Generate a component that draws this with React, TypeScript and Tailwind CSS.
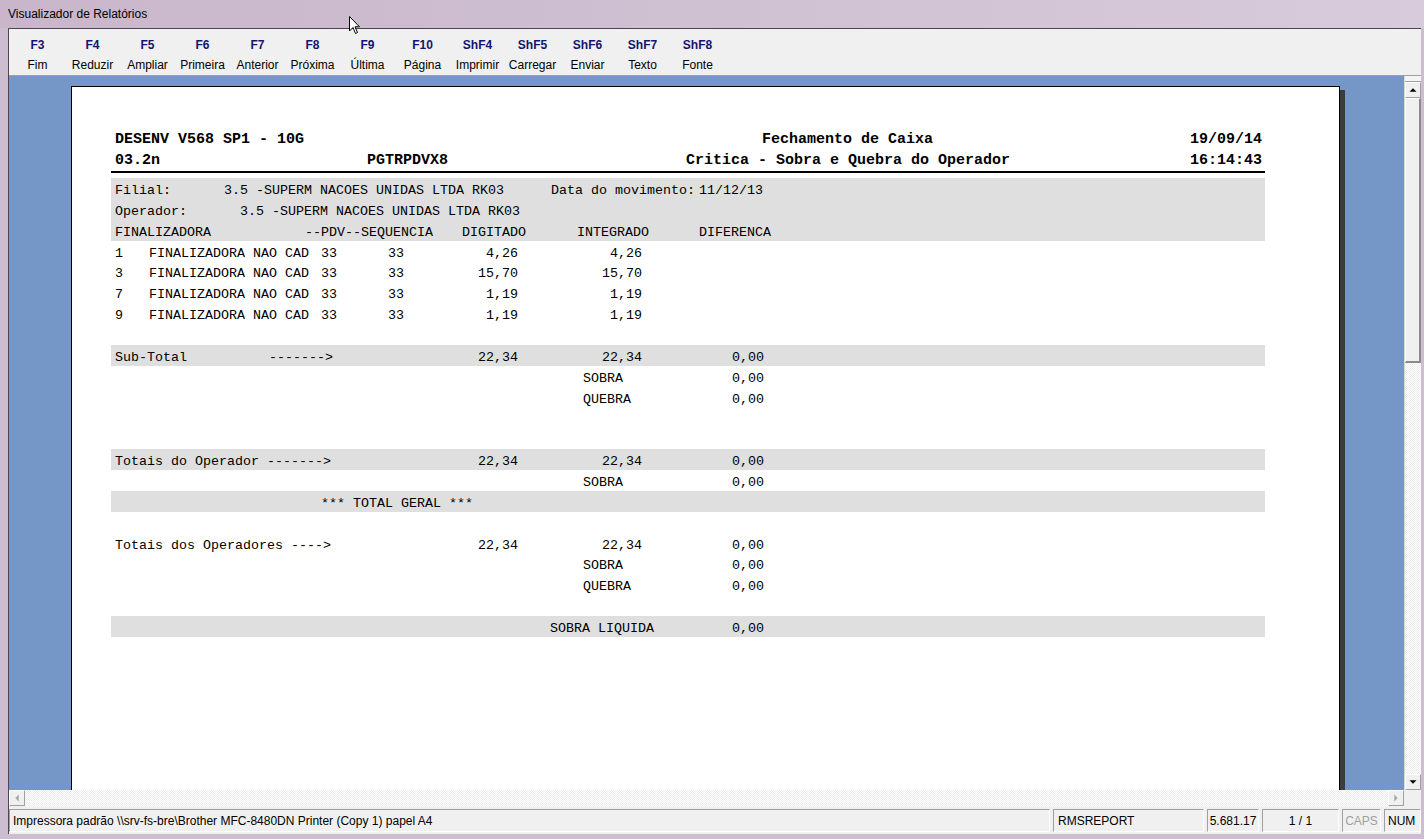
import React from 'react';

const mono = { fontFamily: '"Liberation Mono", "Courier New", monospace' };
const sans = { fontFamily: 'Tahoma, "Liberation Sans", Arial, sans-serif' };

const keys = [
  ['F3', 'Fim'],
  ['F4', 'Reduzir'],
  ['F5', 'Ampliar'],
  ['F6', 'Primeira'],
  ['F7', 'Anterior'],
  ['F8', 'Próxima'],
  ['F9', 'Última'],
  ['F10', 'Página'],
  ['ShF4', 'Imprimir'],
  ['ShF5', 'Carregar'],
  ['ShF6', 'Enviar'],
  ['ShF7', 'Texto'],
  ['ShF8', 'Fonte'],
];

type Seg = { w?: number; t?: string; r?: boolean };

// uma linha do relatorio: segmentos com largura fixa, a partir do x=116
const Line = ({ segs, band }: { segs: Seg[]; band?: boolean }) => (
  <div className={`flex h-[20.86px] items-center pl-[4px] pt-[5px] whitespace-pre text-[13.33px] text-black ${band ? 'bg-[#dfdfdf]' : ''}`}>
    {segs.map((s, i) => (
      <span
        key={i}
        style={s.w ? { width: s.w } : undefined}
        className={`${s.w ? 'shrink-0' : ''} ${s.r ? 'text-right' : ''}`}
      >
        {s.t ?? ''}
      </span>
    ))}
  </div>
);

const totals = (label: string, a: string, b: string, c: string): Seg[] => [
  { w: 234, t: label },
  { w: 169, t: a, r: true },
  { w: 124, t: b, r: true },
  { w: 122, t: c, r: true },
];

const extra = (label: string, v: string): Seg[] => [{ w: 468 }, { w: 100, t: label }, { w: 81, t: v, r: true }];

const dataRow = (n: string, dig: string, intg: string): Seg[] => [
  { w: 34, t: n },
  { w: 172, t: 'FINALIZADORA NAO CAD' },
  { w: 67, t: '33' },
  { w: 40, t: '33' },
  { w: 90, t: dig, r: true },
  { w: 124, t: intg, r: true },
];

const ArrowBtn = ({ dir }: { dir: 'up' | 'down' | 'left' | 'right' }) => {
  const paths: Record<string, string> = {
    up: 'M4 10 L8 6 L12 10 Z',
    down: 'M4 6 L8 10 L12 6 Z',
    left: 'M10 4 L6 8 L10 12 Z',
    right: 'M6 4 L10 8 L6 12 Z',
  };
  const light = dir === 'left' || dir === 'right';
  return (
    <div className="w-[16px] h-[16px] bg-[#f0f0f0] border-t border-l border-white border-r border-b border-r-[#a0a0a0] border-b-[#a0a0a0] flex items-center justify-center shrink-0">
      <svg width="16" height="16" viewBox="0 0 16 16">
        <path d={paths[dir]} fill={light ? '#a8a8a8' : '#000'} />
      </svg>
    </div>
  );
};

const dither = {
  backgroundImage: 'repeating-conic-gradient(#ffffff 0% 25%, #ececec 0% 50%)',
  backgroundSize: '2px 2px',
};

const panel = 'border border-t-[#a0a0a0] border-l-[#a0a0a0] border-r-white border-b-white flex items-center';

export default function App() {
  return (
    <div className="w-[1424px] h-[839px] overflow-hidden flex flex-col bg-[#cdbdd0]" style={sans}>
      {/* barra de titulo */}
      <div className="relative h-[28px] shrink-0 flex items-center pl-[8px] bg-gradient-to-r from-[#c9b6cb] via-[#cfc0d2] to-[#d8cbdb]">
        <span className="text-[12px] text-black">Visualizador de Relatórios</span>
        <svg className="absolute left-[349px] top-[16px]" width="12" height="19" viewBox="0 0 12 19">
          <path d="M0.5 0.5 L0.5 15 L4 11.5 L6.5 17.5 L8.5 16.5 L6 10.8 L10.5 10.8 Z" fill="#fff" stroke="#000" strokeWidth="1" />
        </svg>
      </div>

      <div className="flex-1 flex pl-[8px] pr-[3px] pb-[5px] min-h-0">
        <div className="flex-1 flex flex-col border-l border-t border-[#4d4553] min-w-0">
          {/* barra de teclas */}
          <div className="h-[47px] shrink-0 bg-[#f0f0f0] border-b border-[#a0a0a0] flex items-start pt-[6px] pl-[1px]">
            {keys.map(([k, l]) => (
              <div key={k} className="w-[55px] flex flex-col items-center text-[12px] leading-[20px]">
                <span className="font-bold text-[#14146e]">{k}</span>
                <span className="text-black">{l}</span>
              </div>
            ))}
          </div>

          {/* area de visualizacao */}
          <div className="flex-1 flex min-h-0">
            <div className="flex-1 bg-[#7597c7] overflow-hidden relative pl-[62px] pt-[10px]">
              <div className="relative w-[1269px] h-[800px]">
                <div className="absolute left-[1269px] top-[4px] w-[5px] h-[800px] bg-[#3c3c3c]" />
                <div className="w-[1269px] h-[800px] bg-white border border-black pl-[39px] pt-[39px]" style={mono}>
                  <div className="w-[1154px]">
                    {/* cabecalho */}
                    <div className="flex h-[21px] items-center pl-[4px] pr-[3px] pt-[7px] font-bold text-[15px] whitespace-pre">
                      <span className="w-[647px] shrink-0">DESENV V568 SP1 - 10G</span>
                      <span>Fechamento de Caixa</span>
                      <span className="flex-1 text-right">19/09/14</span>
                    </div>
                    <div className="flex h-[21px] items-center pl-[4px] pr-[3px] pt-[7px] font-bold text-[15px] whitespace-pre">
                      <span className="w-[252px] shrink-0">03.2n</span>
                      <span className="w-[319px] shrink-0">PGTRPDVX8</span>
                      <span>Critica - Sobra e Quebra do Operador</span>
                      <span className="flex-1 text-right">16:14:43</span>
                    </div>
                    <div className="h-[2px] bg-black mt-[3px] mb-[5px]" />

                    <Line band segs={[{ w: 109, t: 'Filial:' }, { w: 327, t: '3.5 -SUPERM NACOES UNIDAS LTDA RK03' }, { w: 148, t: 'Data do movimento:' }, { t: '11/12/13' }]} />
                    <Line band segs={[{ w: 125, t: 'Operador:' }, { t: '3.5 -SUPERM NACOES UNIDAS LTDA RK03' }]} />
                    <Line band segs={[{ w: 190, t: 'FINALIZADORA' }, { w: 157, t: '--PDV--SEQUENCIA' }, { w: 115, t: 'DIGITADO' }, { w: 122, t: 'INTEGRADO' }, { t: 'DIFERENCA' }]} />
                    <Line segs={dataRow('1', '4,26', '4,26')} />
                    <Line segs={dataRow('3', '15,70', '15,70')} />
                    <Line segs={dataRow('7', '1,19', '1,19')} />
                    <Line segs={dataRow('9', '1,19', '1,19')} />
                    <Line segs={[]} />
                    <Line band segs={[{ w: 154, t: 'Sub-Total' }, { w: 80, t: '------->' }, ...totals('', '22,34', '22,34', '0,00').slice(1)]} />
                    <Line segs={extra('SOBRA', '0,00')} />
                    <Line segs={extra('QUEBRA', '0,00')} />
                    <Line segs={[]} />
                    <Line segs={[]} />
                    <Line band segs={totals('Totais do Operador ------->', '22,34', '22,34', '0,00')} />
                    <Line segs={extra('SOBRA', '0,00')} />
                    <Line band segs={[{ w: 206 }, { t: '*** TOTAL GERAL ***' }]} />
                    <Line segs={[]} />
                    <Line segs={totals('Totais dos Operadores ---->', '22,34', '22,34', '0,00')} />
                    <Line segs={extra('SOBRA', '0,00')} />
                    <Line segs={extra('QUEBRA', '0,00')} />
                    <Line segs={[]} />
                    <Line band segs={[{ w: 435 }, { w: 130, t: 'SOBRA LIQUIDA' }, { w: 84, t: '0,00', r: true }]} />
                  </div>
                </div>
              </div>
            </div>

            {/* barra de rolagem vertical */}
            <div className="w-[17px] shrink-0 flex flex-col bg-[#f0f0f0] border-l border-[#d8d8d8]">
              <div className="h-[6px] border-b border-[#a0a0a0] bg-[#f4f4f4]" />
              <ArrowBtn dir="up" />
              <div className="h-[265px] bg-[#f0f0f0] border-t border-l border-white border-r-2 border-b-2 border-r-[#8a8a8a] border-b-[#8a8a8a]" />
              <div className="flex-1" style={dither} />
              <ArrowBtn dir="down" />
            </div>
          </div>

          {/* barra de rolagem horizontal */}
          <div className="h-[17px] shrink-0 flex bg-[#f0f0f0]">
            <ArrowBtn dir="left" />
            <div className="flex-1" style={dither} />
            <ArrowBtn dir="right" />
            <div className="w-[17px] bg-[#f0f0f0]" />
          </div>

          {/* barra de status */}
          <div className="h-[27px] shrink-0 bg-[#f0f0f0] flex gap-[3px] pt-[2px] pb-[2px] text-[12px] text-black">
            <div className={`w-[1041px] pl-[3px] ${panel}`}>
              Impressora padrão \\srv-fs-bre\Brother MFC-8480DN Printer (Copy 1) papel A4
            </div>
            <div className={`w-[151px] pl-[4px] ${panel}`}>RMSREPORT</div>
            <div className={`w-[52px] justify-center ${panel}`}>5.681.17</div>
            <div className={`w-[77px] justify-center ${panel}`}>1 / 1</div>
            <div className={`w-[39px] justify-center text-[#a0a0a0] ${panel}`}>CAPS</div>
            <div className={`flex-1 pl-[3px] ${panel}`}>NUM</div>
          </div>
        </div>
      </div>
    </div>
  );
}
